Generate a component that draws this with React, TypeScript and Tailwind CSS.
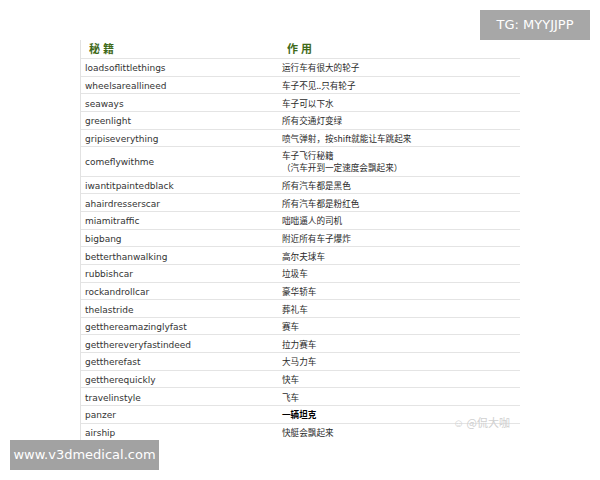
import React from "react";

const rows: [string, string, boolean?][] = [
  ["loadsoflittlethings", "运行车有很大的轮子"],
  ["wheelsareallineed", "车子不见..只有轮子"],
  ["seaways", "车子可以下水"],
  ["greenlight", "所有交通灯变绿"],
  ["gripiseverything", "喷气弹射，按shift就能让车跳起来"],
  ["comeflywithme", "车子飞行秘籍\n（汽车开到一定速度会飘起来）"],
  ["iwantitpaintedblack", "所有汽车都是黑色"],
  ["ahairdresserscar", "所有汽车都是粉红色"],
  ["miamitraffic", "咄咄逼人的司机"],
  ["bigbang", "附近所有车子爆炸"],
  ["betterthanwalking", "高尔夫球车"],
  ["rubbishcar", "垃圾车"],
  ["rockandrollcar", "豪华轿车"],
  ["thelastride", "葬礼车"],
  ["getthereamazinglyfast", "赛车"],
  ["getthereveryfastindeed", "拉力赛车"],
  ["getttherefast".replace("ttt", "tt"), "大马力车"],
  ["gettherequickly", "快车"],
  ["travelinstyle", "飞车"],
  ["panzer", "一辆坦克", true],
  ["airship", "快艇会飘起来"],
];

const latin = "font-['DejaVu_Sans',sans-serif]";
const cjk = "font-['Noto_Sans_CJK_SC',sans-serif]";

export default function App() {
  return (
    <div className="w-[600px] h-[480px] bg-white flex flex-col">
      <div className="flex justify-end pt-[10px] pr-[10px]">
        <div className={`bg-[#a7a7a7] text-white text-[13px] h-[30px] w-[110px] flex items-center justify-center ${latin}`}>
          TG: MYYJJPP
        </div>
      </div>

      <div className="ml-[80px] w-[440px] border-l border-[#e2e2e2]">
        <div className="h-[19px] flex items-end pb-[2px] border-b border-[#e4e4e4] text-[#3f6a19] font-bold text-[11px]">
          <div className={`w-[205px] pl-[8px] tracking-[3px] ${cjk}`}>秘籍</div>
          <div className={`pl-[1px] tracking-[3px] ${cjk}`}>作用</div>
        </div>
        {rows.map(([code, desc, bold], i) => {
          const multi = desc.includes("\n");
          return (
            <div
              key={i}
              className={`flex items-center ${multi ? "h-[29.5px]" : "h-[17.65px]"} ${i < rows.length - 1 ? "border-b border-[#e4e4e4]" : ""}`}
            >
              <div className={`w-[201px] pl-[4px] pt-[2px] text-[9px] leading-[12px] text-[#333] ${latin}`}>{code}</div>
              <div className={`text-[8.6px] leading-[12px] whitespace-pre ${bold ? "font-bold text-black" : "text-[#2a2a2a]"} ${cjk}`}>
                {desc}
              </div>
            </div>
          );
        })}
      </div>

      <div className="flex justify-end pr-[90px] -mt-[27px]">
        <div className={`text-[11px] text-[#d0d0d0] ${cjk}`}>☺ @侃大咖</div>
      </div>

      <div className="mt-auto pl-[10px] pb-[10px]">
        <div className={`bg-[#a2a2a2] text-white text-[13px] h-[30px] w-[149px] flex items-center justify-center ${latin}`}>
          www.v3dmedical.com
        </div>
      </div>
    </div>
  );
}
